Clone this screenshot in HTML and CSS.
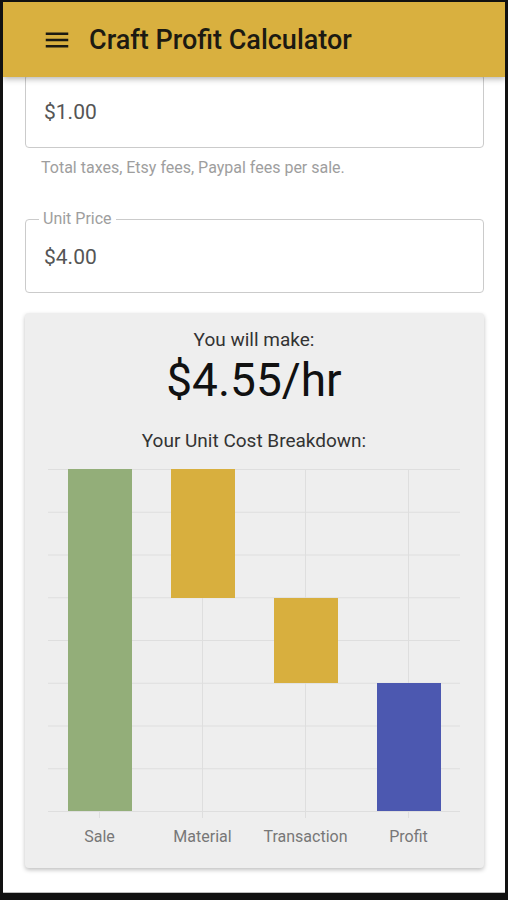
FILE: index.html
```html
<!DOCTYPE html>
<html lang="en">
<head>
  <meta charset="UTF-8">
  <title>Craft Profit Calculator</title>
  <link rel="stylesheet" href="styles.css">
</head>
<body>

  <div class="screen">
    <header class="appbar">
      <svg class="menu-icon" viewBox="0 0 24 24" width="30" height="30">
        <path d="M3 18h18v-2H3v2zm0-5h18v-2H3v2zm0-7v2h18V6H3z"/>
      </svg>
      <h1>Craft Profit Calculator</h1>
    </header>

    <main class="content">
      <div class="field field-first">
        <span class="field-value">$1.00</span>
      </div>
      <p class="helper">Total taxes, Etsy fees, Paypal fees per sale.</p>

      <div class="field">
        <span class="field-label">Unit Price</span>
        <span class="field-value">$4.00</span>
      </div>

      <section class="card">
        <p class="card-caption">You will make:</p>
        <p class="rate">$4.55/hr</p>
        <p class="card-caption breakdown">Your Unit Cost Breakdown:</p>

        <svg class="chart" viewBox="0 0 412 385" width="412" height="385">
          <g class="grid">
            <line x1="0" x2="412" y1="4.5" y2="4.5"/>
            <line x1="0" x2="412" y1="47.25" y2="47.25"/>
            <line x1="0" x2="412" y1="90" y2="90"/>
            <line x1="0" x2="412" y1="132.75" y2="132.75"/>
            <line x1="0" x2="412" y1="175.5" y2="175.5"/>
            <line x1="0" x2="412" y1="218.25" y2="218.25"/>
            <line x1="0" x2="412" y1="261" y2="261"/>
            <line x1="0" x2="412" y1="303.75" y2="303.75"/>
            <line x1="0" x2="412" y1="346.5" y2="346.5"/>
            <line x1="51.5" x2="51.5" y1="4" y2="353"/>
            <line x1="154.5" x2="154.5" y1="4" y2="353"/>
            <line x1="257.5" x2="257.5" y1="4" y2="353"/>
            <line x1="360.5" x2="360.5" y1="4" y2="353"/>
          </g>
          <rect class="bar-sale" x="20" y="4" width="64" height="342"/>
          <rect class="bar-cost" x="123" y="4" width="64" height="129"/>
          <rect class="bar-cost" x="226" y="133" width="64" height="85"/>
          <rect class="bar-profit" x="329" y="218" width="64" height="128"/>
          <g class="axis-labels">
            <text x="51.5" y="377">Sale</text>
            <text x="154.5" y="377">Material</text>
            <text x="257.5" y="377">Transaction</text>
            <text x="360.5" y="377">Profit</text>
          </g>
        </svg>
      </section>
    </main>
  </div>

</body>
</html>
```

FILE: styles.css
```css
* {
  box-sizing: border-box;
}

body {
  margin: 0;
  padding: 2px 3px 0;
  background: #111;
  font-family: Roboto, 'Liberation Sans', sans-serif;
}

.screen {
  height: 891px;
  background: white;
  overflow: hidden;
  border-bottom: 1px solid #bdbdbd;
}

.appbar {
  position: relative;
  z-index: 2;
  height: 75px;
  display: flex;
  align-items: center;
  padding-left: 39px;
  background-color: #d9b03f;
  box-shadow: 0 2px 6px rgba(0,0,0,0.3);
}

.menu-icon {
  fill: #1c1a12;
  margin-right: 17px;
}

.appbar h1 {
  margin: 0;
  font-size: 27px;
  font-weight: 500;
  color: #1c1a12;
}

.content {
  margin-top: -3px;
  padding: 0 21px 0 22px;
}

.field {
  position: relative;
  height: 74px;
  display: flex;
  align-items: center;
  padding: 2px 18px 0;
  border: 1px solid #cbcbcb;
  border-radius: 4px;
}

.field-value {
  font-size: 21px;
  color: #555;
}

.field-label {
  position: absolute;
  top: -10px;
  left: 13px;
  padding: 0 4px;
  background: white;
  font-size: 16px;
  line-height: 18px;
  color: #9e9e9e;
}

.helper {
  margin: 11px 0 42px 16px;
  font-size: 16px;
  line-height: 18px;
  color: #9e9e9e;
}

.card {
  margin-top: 20px;
  padding: 17px 24px 18px 23px;
  background: #eeeeee;
  border-radius: 4px;
  box-shadow: 0 2px 4px rgba(0,0,0,0.25);
  text-align: center;
}

.card-caption {
  margin: 0;
  font-size: 19px;
  line-height: 20px;
  color: #333;
}

.rate {
  margin: 4px 0 0;
  font-size: 46px;
  line-height: 52px;
  color: #111;
}

.breakdown {
  margin-top: 25px;
}

.chart {
  display: block;
  margin-top: 14px;
}

.grid line {
  stroke: #dedede;
  stroke-width: 1;
}

.bar-sale {
  fill: #93ae79;
}

.bar-cost {
  fill: #d8af3e;
}

.bar-profit {
  fill: #4c58b0;
}

.axis-labels text {
  font-family: Roboto, 'Liberation Sans', sans-serif;
  font-size: 16px;
  fill: #777;
  text-anchor: middle;
}
```
